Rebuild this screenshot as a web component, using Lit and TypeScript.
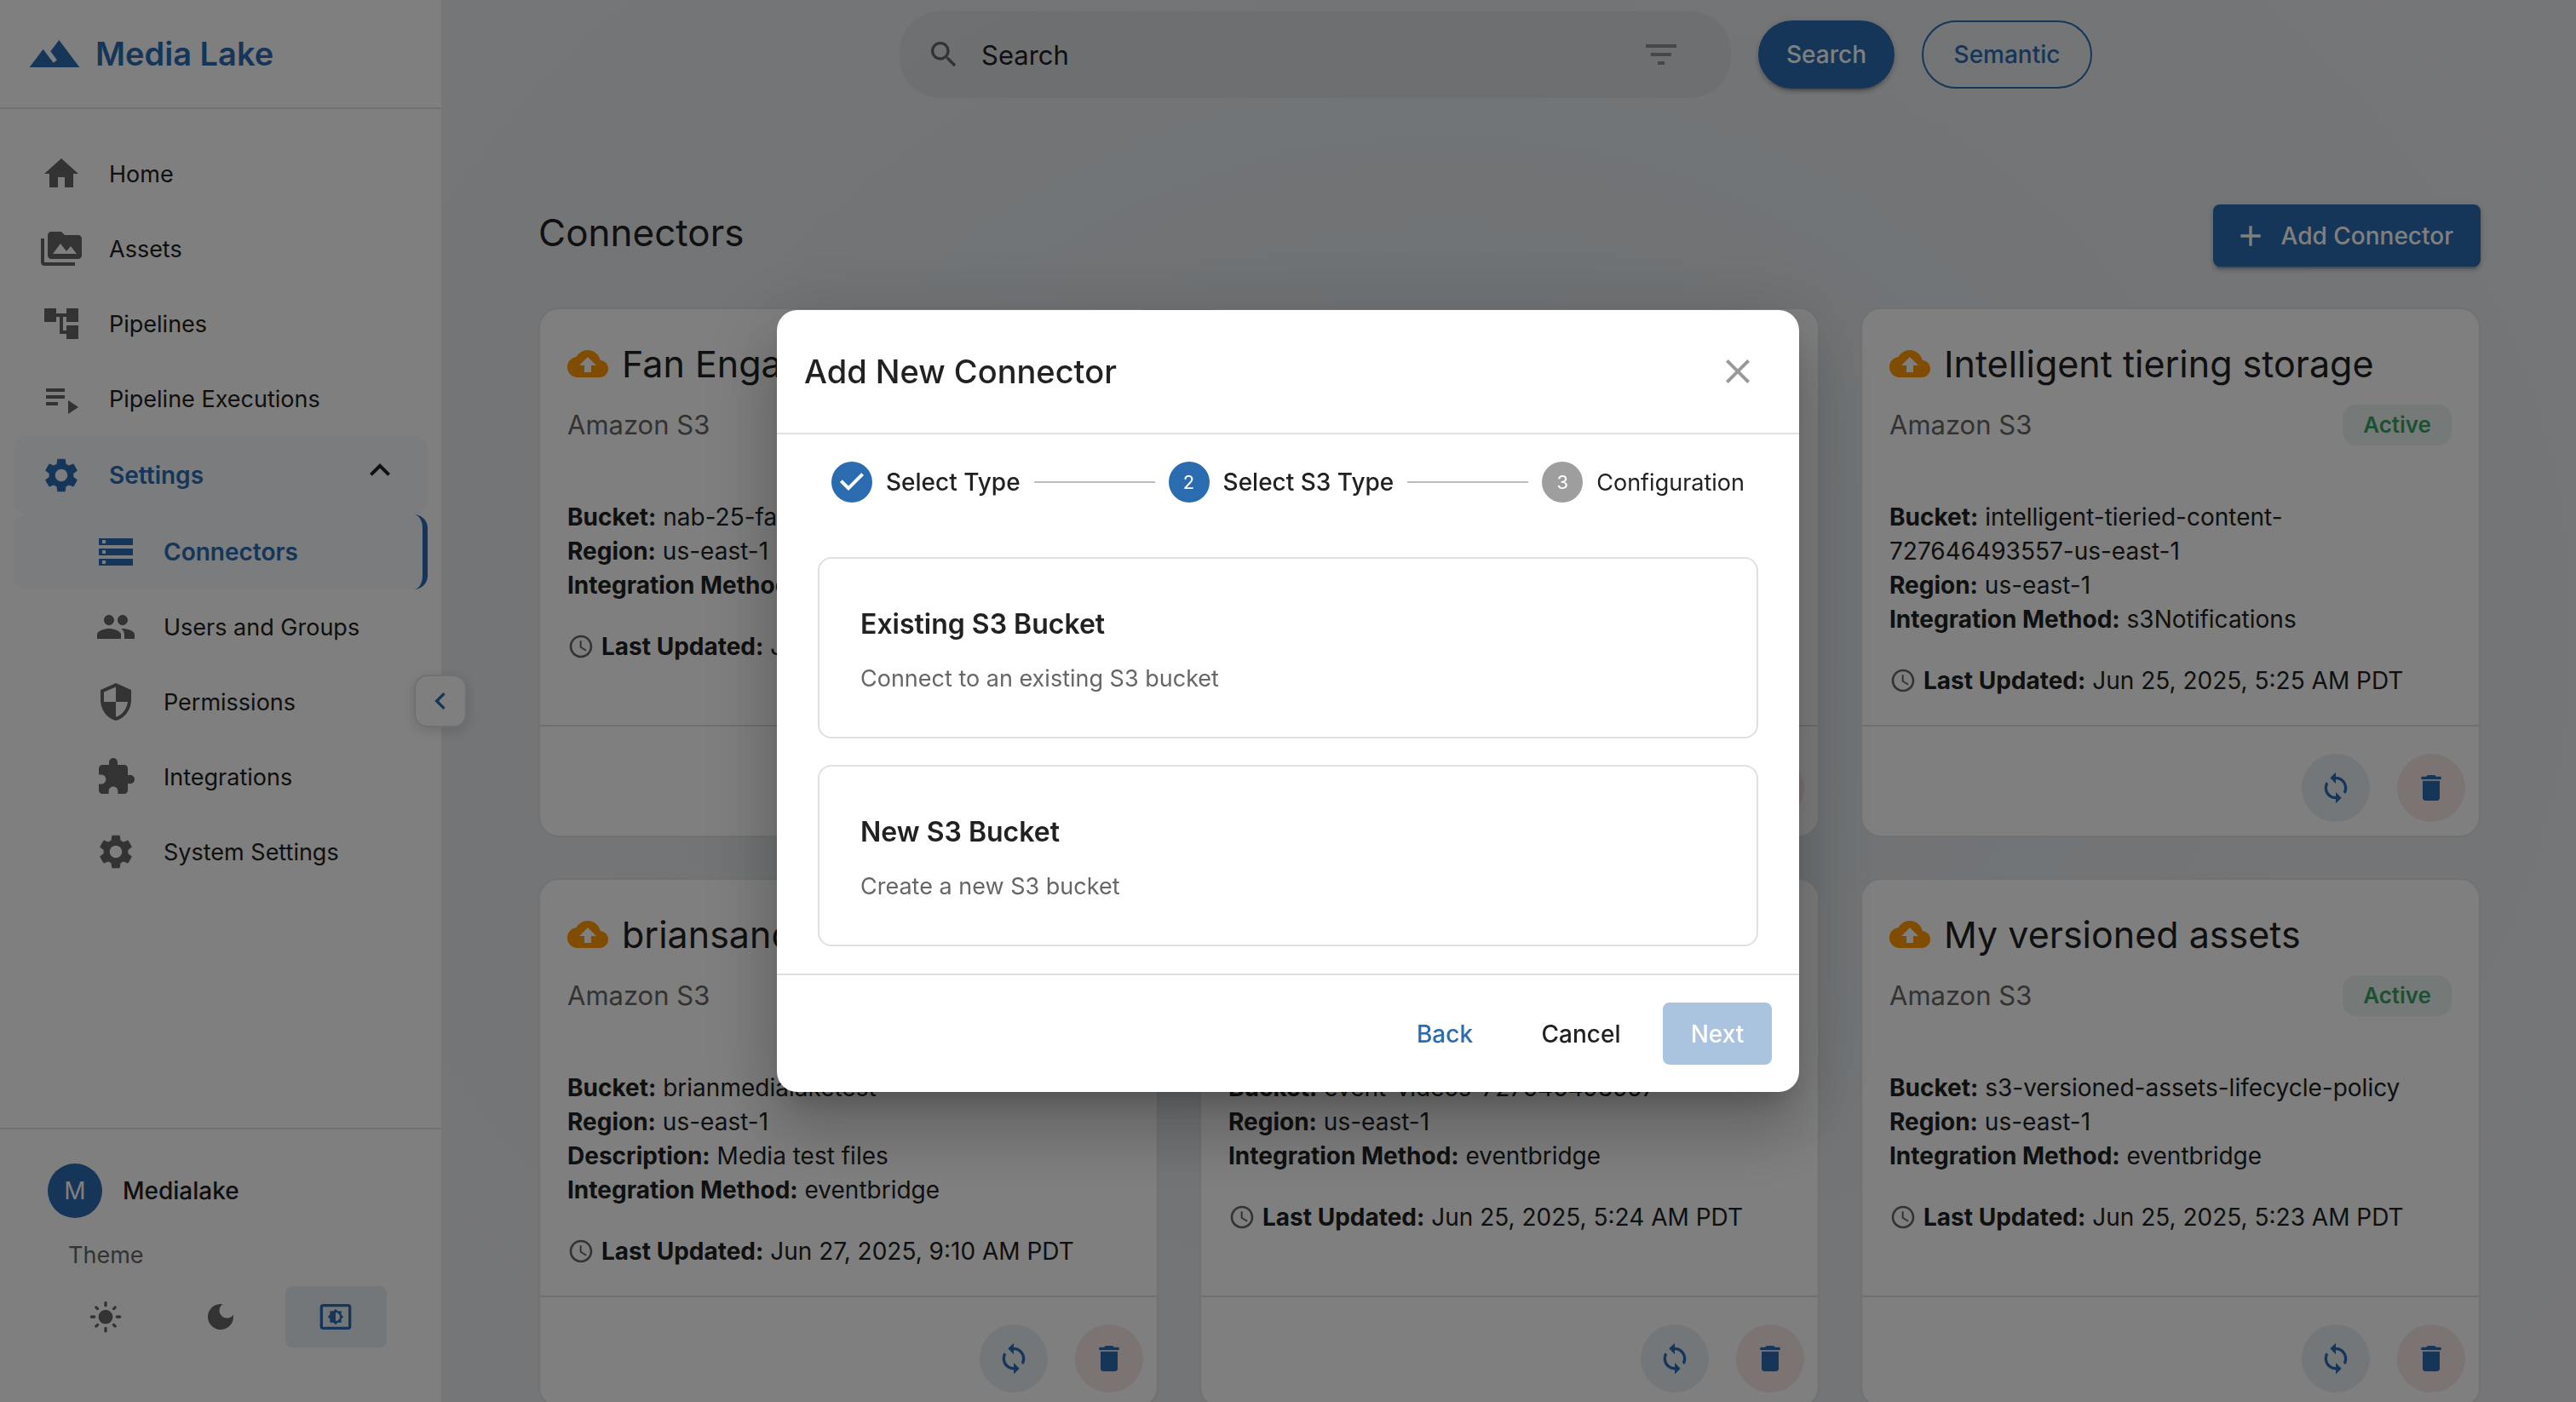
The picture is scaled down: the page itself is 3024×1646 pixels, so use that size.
import { LitElement, html, css, svg, nothing } from "lit";
import { customElement, property, state } from "lit/decorators.js";
import { classMap } from "lit/directives/class-map.js";

const ICONS = {
  logo: "M14 6l-3.75 5 2.85 3.8-1.6 1.2C9.81 13.75 7 10 7 10l-6 8h22L14 6z",
  home: "M10 20v-6h4v6h5v-8h3L12 3 2 12h3v8z",
  media: "M2 6H0v5h.01L0 20c0 1.1.9 2 2 2h18v-2H2V6zm20-2h-8l-2-2H6c-1.1 0-1.99.9-1.99 2L4 16c0 1.1.9 2 2 2h16c1.1 0 2-.9 2-2V6c0-1.1-.9-2-2-2zM7 15l4.5-6 3.5 4.51 2.5-3.01L21 15H7z",
  tree: "M22 11V3h-7v3H9V3H2v8h7V8h2v10h4v3h7v-8h-7v3h-2V8h2v3z",
  playlist: "M3 10h11v2H3zm0-4h11v2H3zm0 8h7v2H3zm13-1v8l6-4z",
  gear: "M19.14 12.94c.04-.3.06-.61.06-.94 0-.32-.02-.64-.07-.94l2.03-1.58c.18-.14.23-.41.12-.61l-1.92-3.32c-.12-.22-.37-.29-.59-.22l-2.39.96c-.5-.38-1.03-.7-1.62-.94l-.36-2.54c-.04-.24-.24-.41-.48-.41h-3.84c-.24 0-.43.17-.47.41l-.36 2.54c-.59.24-1.13.57-1.62.94l-2.39-.96c-.22-.08-.47 0-.59.22L2.74 8.87c-.12.21-.08.47.12.61l2.03 1.58c-.05.3-.09.63-.09.94s.02.64.07.94l-2.03 1.58c-.18.14-.23.41-.12.61l1.92 3.32c.12.22.37.29.59.22l2.39-.96c.5.38 1.03.7 1.62.94l.36 2.54c.05.24.24.41.48.41h3.84c.24 0 .44-.17.47-.41l.36-2.54c.59-.24 1.13-.56 1.62-.94l2.39.96c.22.08.47 0 .59-.22l1.92-3.32c.12-.22.07-.47-.12-.61l-2.01-1.58zM12 15.6c-1.98 0-3.6-1.62-3.6-3.6s1.62-3.6 3.6-3.6 3.6 1.62 3.6 3.6-1.62 3.6-3.6 3.6z",
  storage: "M2 20h20v-4H2v4zm2-3h2v2H4v-2zM2 4v4h20V4H2zm4 3H4V5h2v2zm-4 7h20v-4H2v4zm2-3h2v2H4v-2z",
  people: "M16 11c1.66 0 2.99-1.34 2.99-3S17.66 5 16 5c-1.66 0-3 1.34-3 3s1.34 3 3 3zm-8 0c1.66 0 2.99-1.34 2.99-3S9.66 5 8 5C6.34 5 5 6.34 5 8s1.34 3 3 3zm0 2c-2.33 0-7 1.17-7 3.5V19h14v-2.5c0-2.33-4.67-3.5-7-3.5zm8 0c-.29 0-.62.02-.97.05 1.16.84 1.97 1.97 1.97 3.45V19h6v-2.5c0-2.33-4.67-3.5-7-3.5z",
  shield: "M12 1 3 5v6c0 5.55 3.84 10.74 9 12 5.16-1.26 9-6.45 9-12V5l-9-4zm0 10.99h7c-.53 4.12-3.28 7.79-7 8.94V12H5V6.3l7-3.11v8.8z",
  puzzle: "M20.5 11H19V7c0-1.1-.9-2-2-2h-4V3.5C13 2.12 11.88 1 10.5 1S8 2.12 8 3.5V5H4c-1.1 0-1.99.9-1.99 2v3.8H3.5c1.49 0 2.7 1.21 2.7 2.7s-1.21 2.7-2.7 2.7H2V20c0 1.1.9 2 2 2h3.8v-1.5c0-1.49 1.21-2.7 2.7-2.7 1.49 0 2.7 1.21 2.7 2.7V22H17c1.1 0 2-.9 2-2v-4h1.5c1.38 0 2.5-1.12 2.5-2.5S21.88 11 20.5 11z",
  expandLess: "m12 8-6 6 1.41 1.41L12 10.83l4.59 4.58L18 14z",
  chevronLeft: "M15.41 7.41 14 6l-6 6 6 6 1.41-1.41L10.83 12z",
  sun: "M12 7c-2.76 0-5 2.24-5 5s2.24 5 5 5 5-2.24 5-5-2.24-5-5-5zM2 13h2c.55 0 1-.45 1-1s-.45-1-1-1H2c-.55 0-1 .45-1 1s.45 1 1 1zm18 0h2c.55 0 1-.45 1-1s-.45-1-1-1h-2c-.55 0-1 .45-1 1s.45 1 1 1zM11 2v2c0 .55.45 1 1 1s1-.45 1-1V2c0-.55-.45-1-1-1s-1 .45-1 1zm0 18v2c0 .55.45 1 1 1s1-.45 1-1v-2c0-.55-.45-1-1-1s-1 .45-1 1zM5.99 4.58c-.39-.39-1.03-.39-1.41 0-.39.39-.39 1.03 0 1.41l1.06 1.06c.39.39 1.03.39 1.41 0s.39-1.03 0-1.41L5.99 4.58zm12.37 12.37c-.39-.39-1.03-.39-1.41 0-.39.39-.39 1.03 0 1.41l1.06 1.06c.39.39 1.03.39 1.41 0 .39-.39.39-1.03 0-1.41l-1.06-1.06zm1.06-10.96c.39-.39.39-1.03 0-1.41-.39-.39-1.03-.39-1.41 0l-1.06 1.06c-.39.39-.39 1.03 0 1.41s1.03.39 1.41 0l1.06-1.06zM7.05 18.36c.39-.39.39-1.03 0-1.41-.39-.39-1.03-.39-1.41 0l-1.06 1.06c-.39.39-.39 1.03 0 1.41s1.03.39 1.41 0l1.06-1.06z",
  moon: "M12 3c-4.97 0-9 4.03-9 9s4.03 9 9 9 9-4.03 9-9c0-.46-.04-.92-.1-1.36-.98 1.37-2.58 2.26-4.4 2.26-2.98 0-5.4-2.42-5.4-5.4 0-1.81.89-3.42 2.26-4.4-.44-.06-.9-.1-1.36-.1z",
  system: "M21 3H3c-1.1 0-2 .9-2 2v14c0 1.1.9 2 2 2h18c1.1 0 2-.9 2-2V5c0-1.1-.9-2-2-2zm0 16.01H3V4.99h18v14.02zM8 16h2.5l1.5 1.5 1.5-1.5H16v-2.5l1.5-1.5-1.5-1.5V8h-2.5L12 6.5 10.5 8H8v2.5L6.5 12 8 13.5V16zm4-7c1.66 0 3 1.34 3 3s-1.34 3-3 3V9z",
  search: "M15.5 14h-.79l-.28-.27C15.41 12.59 16 11.11 16 9.5 16 5.91 13.09 3 9.5 3S3 5.91 3 9.5 5.91 16 9.5 16c1.61 0 3.09-.59 4.23-1.57l.27.28v.79l5 4.99L20.49 19l-4.99-5zm-6 0C7.01 14 5 11.99 5 9.5S7.01 5 9.5 5 14 7.01 14 9.5 11.99 14 9.5 14z",
  filter: "M10 18h4v-2h-4v2zM3 6v2h18V6H3zm3 7h12v-2H6v2z",
  add: "M19 13h-6v6h-2v-6H5v-2h6V5h2v6h6v2z",
  cloud: "M19.35 10.04C18.67 6.59 15.64 4 12 4 9.11 4 6.6 5.64 5.35 8.04 2.34 8.36 0 10.91 0 14c0 3.31 2.69 6 6 6h13c2.76 0 5-2.24 5-5 0-2.64-2.05-4.78-4.65-4.96zM14 13v4h-4v-4H7l5-5 5 5h-3z",
  clock: "M11.99 2C6.47 2 2 6.48 2 12s4.47 10 9.99 10C17.52 22 22 17.52 22 12S17.52 2 11.99 2zM12 20c-4.42 0-8-3.58-8-8s3.58-8 8-8 8 3.58 8 8-3.58 8-8 8zm.5-13H11v6l5.25 3.15.75-1.23-4.5-2.67z",
  sync: "M12 4V1L8 5l4 4V6c3.31 0 6 2.69 6 6 0 1.01-.25 1.97-.7 2.8l1.46 1.46C19.54 15.03 20 13.57 20 12c0-4.42-3.58-8-8-8zm0 14c-3.31 0-6-2.69-6-6 0-1.01.25-1.97.7-2.8L5.24 7.74C4.46 8.97 4 10.43 4 12c0 4.42 3.58 8 8 8v3l4-4-4-4v3z",
  trash: "M6 19c0 1.1.9 2 2 2h8c1.1 0 2-.9 2-2V7H6v12zM19 4h-3.5l-1-1h-5l-1 1H5v2h14V4z",
  close: "M19 6.41 17.59 5 12 10.59 6.41 5 5 6.41 10.59 12 5 17.59 6.41 19 12 13.41 17.59 19 19 17.59 13.41 12z",
  done: "M12 0a12 12 0 1 0 0 24 12 12 0 0 0 0-24zm-2 17l-5-5 1.4-1.4 3.6 3.6 7.6-7.6L19 8l-9 9z",
};
type IconName = keyof typeof ICONS;

/** Icon drawn on a 24-unit grid; the size is in pixels. */
const icon = (name: IconName, size = 48) =>
  html`<svg class="icon" width=${size} height=${size} viewBox="0 0 24 24" fill="currentColor" aria-hidden="true">
    ${svg`<path d=${ICONS[name]}></path>`}
  </svg>`;

const base = css`
  * { box-sizing: border-box; }
  h1, h2, h3, p, ul, ol, dl, dd { margin: 0; padding: 0; }
  ul, ol { list-style: none; }
  a { color: inherit; text-decoration: none; }
  button, input { font: inherit; color: inherit; border: 0; background: none; margin: 0; padding: 0; }
  button { cursor: pointer; }
  .icon { display: block; flex: none; }
`;

interface NavEntry { label: string; icon: IconName; }

const MAIN_NAV: NavEntry[] = [
  { label: "Home", icon: "home" },
  { label: "Assets", icon: "media" },
  { label: "Pipelines", icon: "tree" },
  { label: "Pipeline Executions", icon: "playlist" },
];
const SETTINGS_NAV: NavEntry[] = [
  { label: "Connectors", icon: "storage" },
  { label: "Users and Groups", icon: "people" },
  { label: "Permissions", icon: "shield" },
  { label: "Integrations", icon: "puzzle" },
  { label: "System Settings", icon: "gear" },
];

@customElement("lake-sidebar")
class LakeSidebar extends LitElement {
  static styles = [base, css`
    :host { display: flex; flex-direction: column; position: relative; z-index: 1; background: #fff; border-right: 2px solid #ecedef; }
    .brand { display: flex; align-items: center; gap: 16px; height: 128px; padding: 0 32px; border-bottom: 2px solid #e0e0e0; color: #2b6cb0; font-size: 38px; font-weight: 600; }
    nav { flex: 1; min-height: 0; padding: 32px 16px; }
    .item { display: flex; align-items: center; gap: 32px; width: 100%; height: 88px; padding: 0 32px; border-radius: 16px; color: #666; font-size: 27px; text-align: left; }
    .item span { color: #212121; }
    .sub { padding-left: 96px; }
    .group { height: 92px; }
    .current, .current span { color: #2b6cb0; font-size: 28px; font-weight: 600; }
    .current { background: rgba(43, 108, 176, 0.05); }
    .sub.current { border-right: 6px solid #2b6cb0; }
    .group span { flex: 1; }
    .arrow { align-self: flex-start; padding-top: 16px; color: #212121; }
    footer { border-top: 2px solid #e0e0e0; padding: 40px 64px 64px; }
    .user { display: flex; align-items: center; gap: 24px; margin-left: -8px; font-size: 28px; font-weight: 500; }
    .avatar { display: grid; place-items: center; width: 64px; height: 64px; border-radius: 50%; background: #2b6cb0; color: #fff; font-weight: 400; }
    .label { padding: 24px 16px 16px; font-size: 27px; line-height: 40px; color: #666; }
    .themes { display: grid; grid-template-columns: repeat(3, 1fr); gap: 16px; }
    .themes button { display: grid; place-items: center; height: 72px; border-radius: 8px; color: #666; }
    .themes .on { background: #e6eff5; color: #2b6cb0; }
    .collapse { position: absolute; right: -30px; top: 50%; transform: translateY(-50%); display: grid; place-items: center; width: 62px; height: 62px; border-radius: 16px; background: #fff; border: 2px solid #e0e0e0; color: #2b6cb0; box-shadow: 0 4px 16px rgba(0, 0, 0, 0.14); }
  `];

  @state() private theme = "system";

  render() {
    const themes: [string, IconName][] = [["light", "sun"], ["dark", "moon"], ["system", "system"]];
    return html`
      <div class="brand">${icon("logo", 64)}<span>Media Lake</span></div>
      <nav aria-label="Main">
        <ul>
          ${MAIN_NAV.map((n) => html`<li><a class="item" href="#">${icon(n.icon)}<span>${n.label}</span></a></li>`)}
          <li>
            <button class="item group current" aria-expanded="true">
              ${icon("gear")}<span>Settings</span><div class="arrow">${icon("expandLess")}</div>
            </button>
            <ul>
              ${SETTINGS_NAV.map((n, i) => html`<li>
                <a class=${classMap({ item: true, sub: true, current: i === 0 })} href="#">${icon(n.icon)}<span>${n.label}</span></a>
              </li>`)}
            </ul>
          </li>
        </ul>
      </nav>
      <footer>
        <div class="user"><div class="avatar">M</div>Medialake</div>
        <p class="label">Theme</p>
        <div class="themes">
          ${themes.map(([id, ic]) => html`<button class=${classMap({ on: this.theme === id })} aria-label="${id} theme"
            aria-pressed=${this.theme === id} @click=${() => (this.theme = id)}>${icon(ic, 40)}</button>`)}
        </div>
      </footer>
      <button class="collapse" aria-label="Collapse sidebar">${icon("chevronLeft", 40)}</button>
    `;
  }
}

interface Connector {
  name: string;
  fields: [string, string][];
  updated: string;
}

const CONNECTORS: Connector[] = [
  { name: "Fan Engagement", updated: "Jun 27, 2025, 9:12 AM PDT",
    fields: [["Bucket", "nab-25-fan-engagement"], ["Region", "us-east-1"], ["Integration Method", "eventbridge"]] },
  { name: "Media storage", updated: "Jun 25, 2025, 5:26 AM PDT",
    fields: [["Bucket", "media-storage"], ["Region", "us-east-1"], ["Integration Method", "eventbridge"]] },
  { name: "Intelligent tiering storage", updated: "Jun 25, 2025, 5:25 AM PDT",
    fields: [["Bucket", "intelligent-tieried-content-727646493557-us-east-1"], ["Region", "us-east-1"], ["Integration Method", "s3Notifications"]] },
  { name: "briansandbox", updated: "Jun 27, 2025, 9:10 AM PDT",
    fields: [["Bucket", "brianmedialaketest"], ["Region", "us-east-1"], ["Description", "Media test files"], ["Integration Method", "eventbridge"]] },
  { name: "Event videos", updated: "Jun 25, 2025, 5:24 AM PDT",
    fields: [["Bucket", "event-videos-727646493557"], ["Region", "us-east-1"], ["Integration Method", "eventbridge"]] },
  { name: "My versioned assets", updated: "Jun 25, 2025, 5:23 AM PDT",
    fields: [["Bucket", "s3-versioned-assets-lifecycle-policy"], ["Region", "us-east-1"], ["Integration Method", "eventbridge"]] },
];

@customElement("connector-card")
class ConnectorCard extends LitElement {
  static styles = [base, css`
    :host { display: flex; flex-direction: column; background: #fff; border: 2px solid #e2e3e4; border-radius: 24px; font-size: 28px; line-height: 40px; color: #212121; }
    .body { flex: 1; padding: 32px; }
    .head { display: flex; align-items: center; gap: 16px; height: 64px; }
    .head .icon { color: #ff9900; }
    h2 { font-size: 43px; font-weight: 400; white-space: nowrap; }
    .kind { display: flex; align-items: center; justify-content: space-between; margin: 16px 0 64px; height: 48px; font-size: 31px; color: #666; }
    .chip { padding: 4px 24px; border-radius: 16px; background: rgba(56, 161, 105, 0.1); color: #38a169; font-size: 26px; font-weight: 600; }
    .updated { display: flex; align-items: center; gap: 8px; margin-top: 32px; }
    .updated .icon { color: #666; }
    .actions { display: flex; justify-content: flex-end; gap: 32px; padding: 32px 16px 16px; border-top: 2px solid #e0e0e0; }
    .actions button { display: grid; place-items: center; width: 80px; height: 80px; border-radius: 50%; color: #2b6cb0; }
    .sync { background: #e6eff5; }
    .delete { background: #f9e6e7; }
  `];

  @property({ attribute: false }) connector!: Connector;

  render() {
    const c = this.connector;
    return html`
      <div class="body">
        <div class="head">${icon("cloud")}<h2>${c.name}</h2></div>
        <div class="kind"><span>Amazon S3</span><span class="chip">Active</span></div>
        ${c.fields.map(([k, v]) => html`<p><b>${k}:</b> ${v}</p>`)}
        <div class="updated">${icon("clock", 32)}<p><b>Last Updated:</b> ${c.updated}</p></div>
      </div>
      <div class="actions">
        <button class="sync" aria-label="Sync ${c.name}">${icon("sync", 40)}</button>
        <button class="delete" aria-label="Delete ${c.name}">${icon("trash", 40)}</button>
      </div>
    `;
  }
}

@customElement("add-connector-dialog")
class AddConnectorDialog extends LitElement {
  static styles = [base, css`
    :host { position: fixed; inset: 0; z-index: 2; display: grid; place-items: center; background: rgba(0, 0, 0, 0.5); color: #212121; }
    .panel { width: 1200px; max-width: calc(100% - 128px); background: #fff; border-radius: 24px; box-shadow: 0 22px 30px -14px rgba(0, 0, 0, 0.2), 0 48px 76px 6px rgba(0, 0, 0, 0.14), 0 18px 92px 16px rgba(0, 0, 0, 0.12); }
    header { display: flex; align-items: center; justify-content: space-between; padding: 32px; border-bottom: 2px solid #e0e0e0; }
    h2 { font-size: 38px; font-weight: 500; }
    .close { display: grid; place-items: center; width: 80px; height: 80px; color: #999; }
    .content { padding: 32px 48px; }
    .steps { display: flex; align-items: center; gap: 16px; padding: 0 16px; margin-bottom: 64px; font-size: 28px; font-weight: 500; }
    .step { display: flex; align-items: center; gap: 16px; }
    .step .icon { color: #2b6cb0; }
    .line { flex: 1; height: 2px; background: #bdbdbd; }
    .dot { display: grid; place-items: center; width: 48px; height: 48px; border-radius: 50%; background: #2b6cb0; color: #fff; font-size: 22px; font-weight: 400; }
    .later { font-size: 27px; font-weight: 400; }
    .later .dot { background: #9e9e9e; }
    .options { display: grid; gap: 31px; }
    .option { display: block; width: 100%; padding: 48px; border: 2px solid #e0e0e0; border-radius: 16px; text-align: left; }
    .option strong { display: block; margin-bottom: 16px; font-size: 32px; line-height: 57px; font-weight: 600; }
    .option span { display: block; font-size: 27px; line-height: 40px; color: #666; }
    footer { display: flex; justify-content: flex-end; gap: 32px; padding: 32px; border-top: 2px solid #e0e0e0; font-size: 28px; font-weight: 500; }
    footer button { min-width: 128px; height: 73px; border-radius: 8px; }
    .back { color: #2b6cb0; }
    .next { background: #aac4df; color: #fff; }
  `];

  render() {
    return html`
      <div class="panel" role="dialog" aria-modal="true" aria-labelledby="title">
        <header>
          <h2 id="title">Add New Connector</h2>
          <button class="close" aria-label="Close">${icon("close")}</button>
        </header>
        <div class="content">
          <div class="steps">
            <div class="step">${icon("done")}<span>Select Type</span></div>
            <div class="line"></div>
            <div class="step"><span class="dot">2</span><span>Select S3 Type</span></div>
            <div class="line"></div>
            <div class="step later"><span class="dot">3</span><span>Configuration</span></div>
          </div>
          <div class="options">
            <button class="option"><strong>Existing S3 Bucket</strong><span>Connect to an existing S3 bucket</span></button>
            <button class="option"><strong>New S3 Bucket</strong><span>Create a new S3 bucket</span></button>
          </div>
        </div>
        <footer>
          <button class="back">Back</button>
          <button>Cancel</button>
          <button class="next" disabled>Next</button>
        </footer>
      </div>
    `;
  }
}

@customElement("app-root")
class AppRoot extends LitElement {
  static styles = [base, css`
    :host { display: grid; grid-template: 100% / 520px 1fr; height: 100vh; overflow: hidden; font-family: Inter, Roboto, "Liberation Sans", sans-serif; font-size: 28px; color: #212121;
      background: radial-gradient(ellipse 54% 80% at 56% 45%, #dce4e9 0%, rgba(220, 228, 233, 0) 100%), #ecedf0; }
    main { min-width: 0; }
    .topbar { display: flex; align-items: center; justify-content: center; gap: 32px; height: 128px; padding: 0 32px 0 0; }
    .search { display: flex; align-items: center; gap: 24px; width: 976px; height: 102px; padding: 0 58px 0 32px; border-radius: 48px; background: rgba(0, 0, 0, 0.04); color: #666; }
    .search input { flex: 1; min-width: 0; outline: 0; font-size: 31px; color: #212121; }
    .search input::placeholder { color: #212121; opacity: 1; }
    .filter { color: #8c8f93; }
    .pill { height: 80px; border-radius: 40px; font-weight: 500; }
    .primary { background: #2b6cb0; color: #fff; font-weight: 500; box-shadow: 0 6px 2px -4px rgba(0, 0, 0, 0.2), 0 4px 4px rgba(0, 0, 0, 0.14), 0 2px 10px rgba(0, 0, 0, 0.12); }
    .pill.primary { width: 160px; }
    .outline { width: 200px; border: 2px solid #2b6cb0; color: #2b6cb0; }
    .page { padding: 112px; }
    .heading { display: flex; align-items: flex-start; justify-content: space-between; margin-bottom: 48px; }
    h1 { font-size: 44px; font-weight: 400; line-height: 67px; }
    .add { display: flex; align-items: center; gap: 16px; height: 73px; padding: 0 32px 0 24px; border-radius: 8px; }
    .cards { display: grid; grid-template-columns: repeat(3, minmax(0, 1fr)); gap: 48px; }
  `];

  @state() private dialogOpen = true;

  render() {
    return html`
      <lake-sidebar></lake-sidebar>
      <main>
        <div class="topbar">
          <div class="search">
            ${icon("search", 40)}
            <input type="text" aria-label="Search" placeholder="Search" />
            <button class="filter" aria-label="Filters">${icon("filter")}</button>
          </div>
          <button class="pill primary">Search</button>
          <button class="pill outline">Semantic</button>
        </div>
        <div class="page">
          <div class="heading">
            <h1>Connectors</h1>
            <button class="primary add" @click=${() => (this.dialogOpen = true)}>${icon("add", 40)}<span>Add Connector</span></button>
          </div>
          <div class="cards">
            ${CONNECTORS.map((c) => html`<connector-card .connector=${c}></connector-card>`)}
          </div>
        </div>
      </main>
      ${this.dialogOpen ? html`<add-connector-dialog></add-connector-dialog>` : nothing}
    `;
  }
}
